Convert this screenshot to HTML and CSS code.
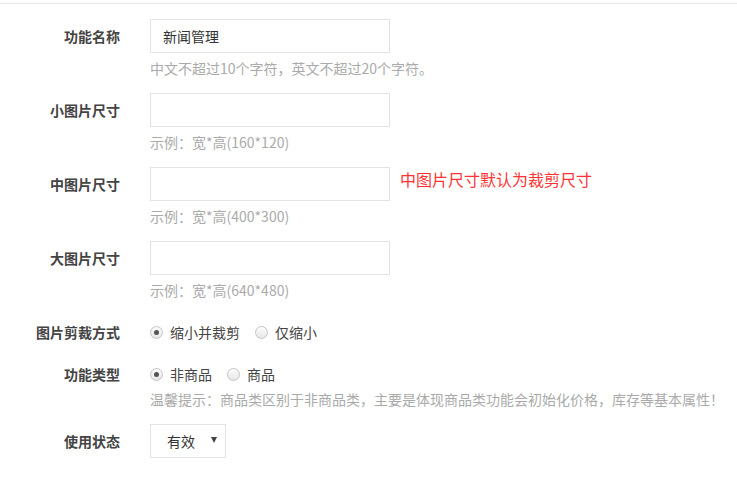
FILE: index.html
```html
<!DOCTYPE html>
<html lang="zh-CN">
<head>
    <meta charset="UTF-8">
    <title>功能设置</title>
    <link rel="stylesheet" href="styles.css">
</head>
<body>
    <div class="panel">
        <div class="form-row">
            <label class="form-label">功能名称</label>
            <div class="form-field">
                <div class="field-line">
                    <input class="text-input" type="text" value="新闻管理">
                </div>
                <p class="hint">中文不超过10个字符，英文不超过20个字符。</p>
            </div>
        </div>

        <div class="form-row">
            <label class="form-label">小图片尺寸</label>
            <div class="form-field">
                <div class="field-line">
                    <input class="text-input" type="text">
                </div>
                <p class="hint">示例：宽*高(160*120)</p>
            </div>
        </div>

        <div class="form-row">
            <label class="form-label">中图片尺寸</label>
            <div class="form-field">
                <div class="field-line">
                    <input class="text-input" type="text">
                    <span class="note-red">中图片尺寸默认为裁剪尺寸</span>
                </div>
                <p class="hint">示例：宽*高(400*300)</p>
            </div>
        </div>

        <div class="form-row">
            <label class="form-label">大图片尺寸</label>
            <div class="form-field">
                <div class="field-line">
                    <input class="text-input" type="text">
                </div>
                <p class="hint">示例：宽*高(640*480)</p>
            </div>
        </div>

        <div class="form-row row-tight">
            <label class="form-label">图片剪裁方式</label>
            <div class="form-field">
                <div class="field-line radio-group">
                    <span class="radio checked"></span><span class="radio-text">缩小并裁剪</span>
                    <span class="radio"></span><span class="radio-text">仅缩小</span>
                </div>
            </div>
        </div>

        <div class="form-row">
            <label class="form-label">功能类型</label>
            <div class="form-field">
                <div class="field-line radio-group">
                    <span class="radio checked"></span><span class="radio-text">非商品</span>
                    <span class="radio"></span><span class="radio-text">商品</span>
                </div>
                <p class="hint hint-close">温馨提示：商品类区别于非商品类，主要是体现商品类功能会初始化价格，库存等基本属性！</p>
            </div>
        </div>

        <div class="form-row">
            <label class="form-label">使用状态</label>
            <div class="form-field">
                <div class="field-line">
                    <div class="select-box">
                        <span>有效</span>
                        <span class="select-arrow"></span>
                    </div>
                </div>
            </div>
        </div>
    </div>
</body>
</html>
```

FILE: styles.css
```css
* {
    margin: 0;
    padding: 0;
    box-sizing: border-box;
}

body {
    font-family: 'Noto Sans CJK SC', 'Noto Sans', sans-serif;
    font-size: 14px;
    color: #333;
    background: #fff;
}

.panel {
    margin-top: 3px;
    border-top: 1px solid #e6e6e6;
    padding-top: 15px;
}

.form-row {
    display: flex;
    margin-bottom: 15px;
}

.row-tight {
    margin-bottom: 8px;
}

.form-label {
    width: 120px;
    margin-right: 30px;
    text-align: right;
    font-weight: bold;
    color: #444;
    line-height: 34px;
    flex-shrink: 0;
}

.field-line {
    display: flex;
    align-items: center;
    height: 34px;
}

.text-input {
    width: 240px;
    height: 34px;
    border: 1px solid #e3e3e3;
    padding: 0 12px;
    font-family: inherit;
    font-size: 14px;
    color: #333;
    outline: none;
}

.hint {
    margin-top: 5px;
    line-height: 20px;
    color: #aaa;
    white-space: nowrap;
}

.hint-close {
    margin-top: 1px;
}

.note-red {
    margin-left: 10px;
    margin-top: -11px;
    font-size: 16px;
    color: #f33;
}

/* radio buttons drawn by hand */
.radio-group {
    height: 31px;
    padding-top: 3px;
}

.radio {
    width: 13px;
    height: 13px;
    border-radius: 50%;
    border: 1px solid #c4c4c4;
    background: linear-gradient(#fdfdfd, #e6e6e6);
    display: inline-flex;
    align-items: center;
    justify-content: center;
    margin-right: 7px;
}

.radio.checked::after {
    content: '';
    width: 5px;
    height: 5px;
    border-radius: 50%;
    background: #555;
}

.radio-text {
    margin-right: 15px;
    color: #444;
}

.select-box {
    width: 76px;
    height: 34px;
    border: 1px solid #e3e3e3;
    display: flex;
    align-items: center;
    justify-content: space-between;
    padding: 0 8px 0 16px;
    color: #333;
}

.select-arrow {
    width: 0;
    height: 0;
    border-left: 3px solid transparent;
    border-right: 3px solid transparent;
    border-top: 6px solid #444;
    margin-top: -3px;
}
```
